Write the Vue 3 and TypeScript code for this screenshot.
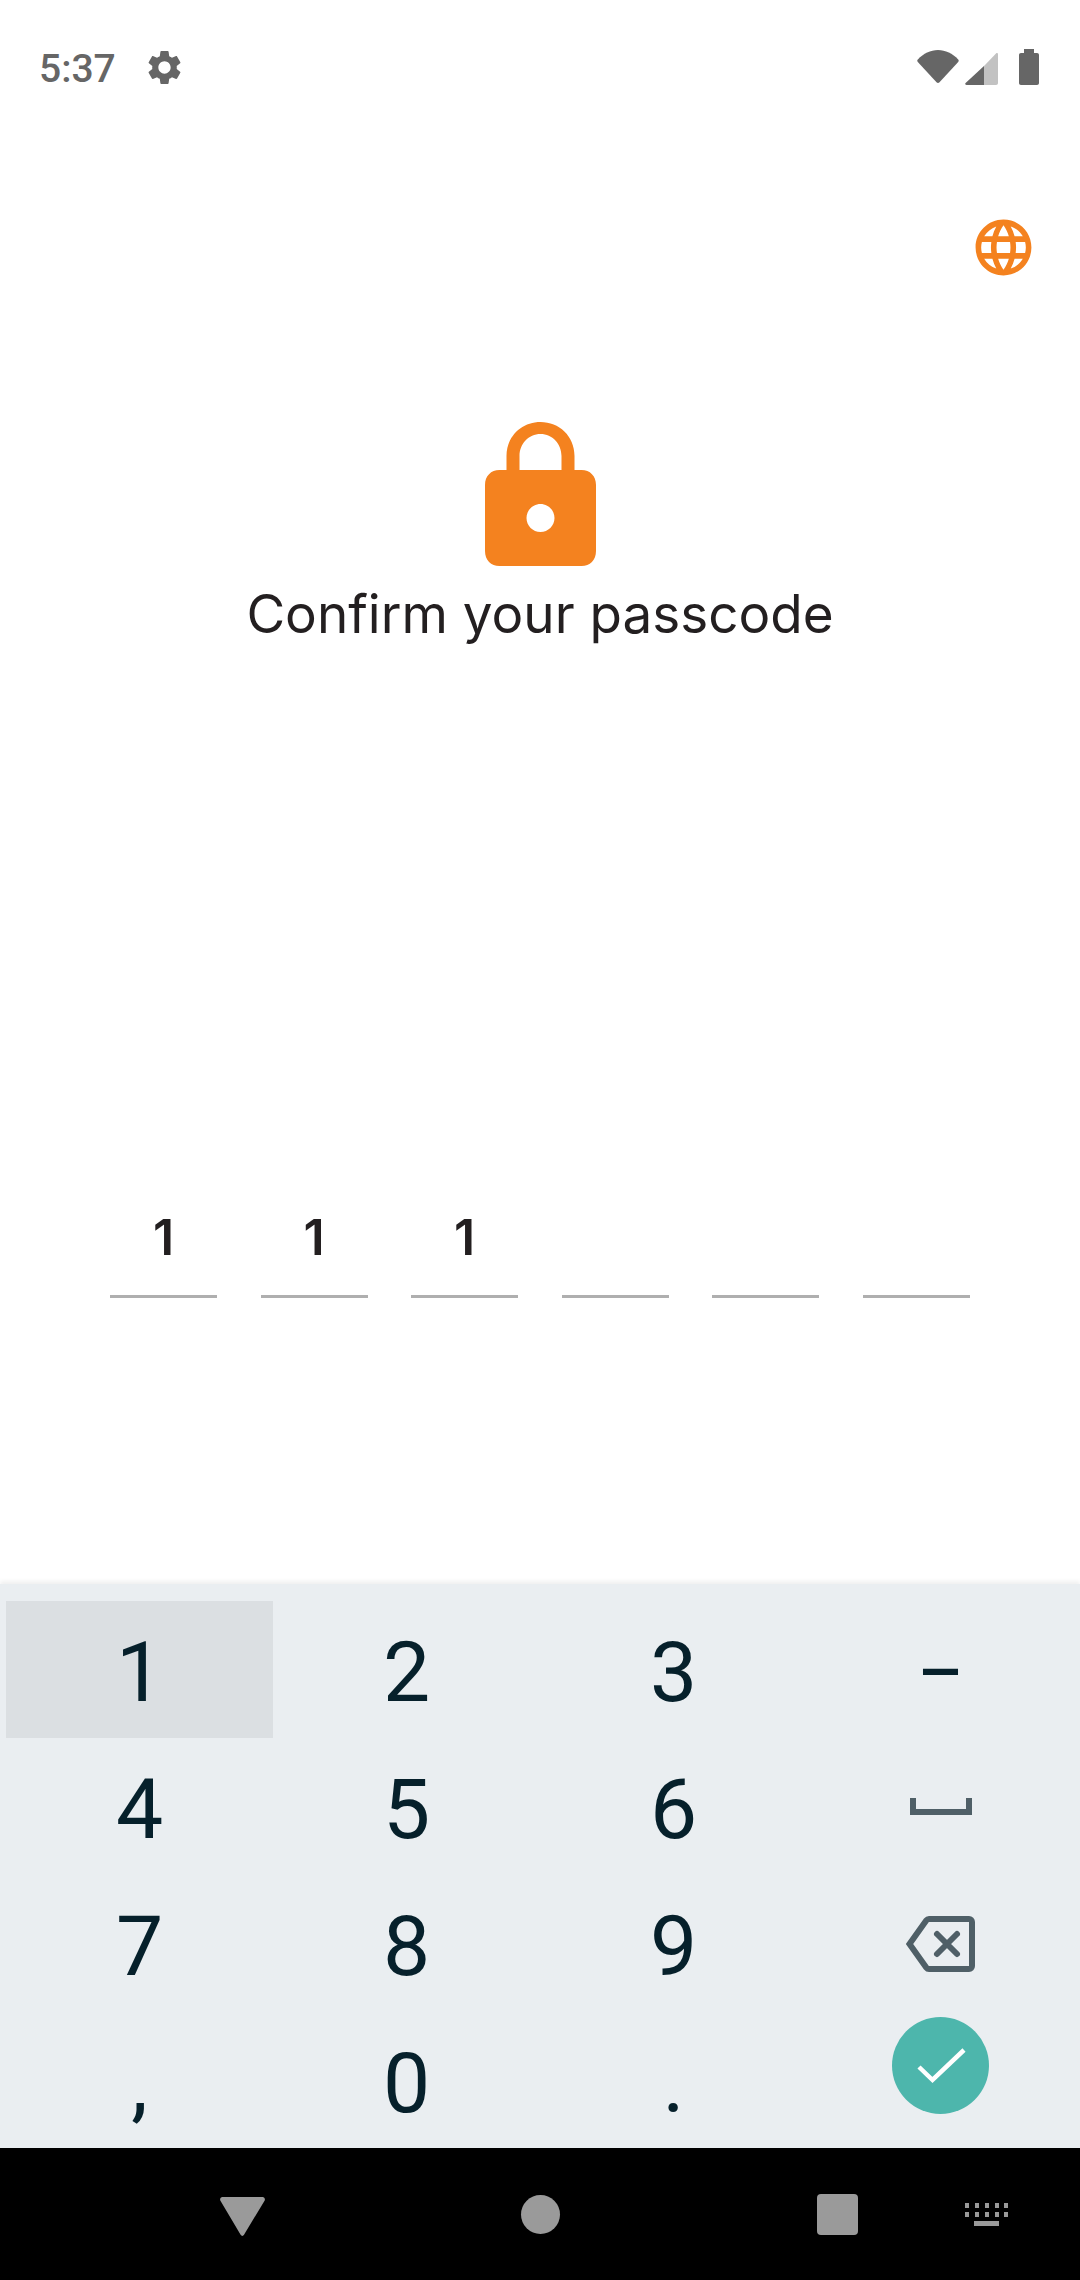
<template>
  <div class="screen">
    <div class="status-bar">
      <span class="clock">5:37</span>
      <svg class="gear" viewBox="0 0 24 24"><path d="M19.14 12.94c.04-.3.06-.61.06-.94 0-.32-.02-.64-.07-.94l2.03-1.58c.18-.14.23-.41.12-.61l-1.92-3.32c-.12-.22-.37-.29-.59-.22l-2.39.96c-.5-.38-1.03-.7-1.62-.94l-.36-2.54c-.04-.24-.24-.41-.48-.41h-3.84c-.24 0-.43.17-.47.41l-.36 2.54c-.59.24-1.13.57-1.62.94l-2.39-.96c-.22-.08-.47 0-.59.22L2.74 8.87c-.12.21-.08.47.12.61l2.03 1.58c-.05.3-.09.63-.09.94s.02.64.07.94l-2.03 1.58c-.18.14-.23.41-.12.61l1.92 3.32c.12.22.37.29.59.22l2.39-.96c.5.38 1.03.7 1.62.94l.36 2.54c.05.24.24.41.48.41h3.84c.24 0 .44-.17.47-.41l.36-2.54c.59-.24 1.13-.56 1.62-.94l2.39.96c.22.08.47 0 .59-.22l1.92-3.32c.12-.22.07-.47-.12-.61l-2.01-1.58zM12 15.6c-1.98 0-3.6-1.62-3.6-3.6s1.62-3.6 3.6-3.6 3.6 1.62 3.6 3.6-1.62 3.6-3.6 3.6z" /></svg>
      <div class="status-right">
        <svg class="wifi" viewBox="0 0 42 33"><path d="M.8 9.500C6.500 3.500 13.500 0 21 0s14.500 3.500 20.200 9.500c.7.800.7 1.600 0 2.400L22.500 32.300c-.9.900-2.100.900-3 0L.8 11.900c-.7-.8-.7-1.600 0-2.400z" /></svg>
        <svg class="signal" viewBox="0 0 33 33">
          <path class="signal-off" d="M19 33V14L31 1.500c.8-.8 2-.3 2 .8V31c0 1.200-.8 2-2 2z" />
          <path d="M19 14v19H1.500C.3 33-.3 31.800.6 31z" />
        </svg>
        <svg class="battery" viewBox="0 0 20 36"><path d="M5 0h10v4h3c1.200 0 2 .8 2 2v28c0 1.200-.8 2-2 2H2c-1.200 0-2-.8-2-2V6c0-1.200.8-2 2-2h3z" /></svg>
      </div>
    </div>

    <div class="lang-row">
      <svg class="globe" viewBox="0 0 24 24"><path d="M11.99 2C6.47 2 2 6.48 2 12s4.47 10 9.990 10C17.520 22 22 17.520 22 12S17.520 2 11.990 2zm6.930 6h-2.950c-.32-1.250-.78-2.450-1.380-3.560 1.840.63 3.370 1.910 4.330 3.560zM12 4.040c.83 1.200 1.480 2.530 1.910 3.960h-3.820c.43-1.430 1.080-2.760 1.910-3.960zM4.260 14C4.100 13.360 4 12.690 4 12s.1-1.360.26-2h3.380c-.08.66-.14 1.320-.14 2 0 .68.06 1.340.14 2H4.260zm.82 2h2.950c.32 1.250.78 2.450 1.380 3.560-1.840-.63-3.370-1.900-4.330-3.560zm2.950-8H5.080c.96-1.660 2.490-2.930 4.330-3.560C8.810 5.550 8.350 6.750 8.030 8zM12 19.960c-.83-1.200-1.480-2.530-1.910-3.960h3.820c-.43 1.430-1.080 2.760-1.910 3.960zM14.340 14H9.660c-.09-.66-.16-1.320-.16-2 0-.68.07-1.350.16-2h4.680c.09.650.16 1.320.16 2 0 .68-.07 1.340-.16 2zm.25 5.560c.6-1.110 1.060-2.310 1.380-3.560h2.950c-.96 1.650-2.490 2.930-4.330 3.560zM16.360 14c.08-.66.14-1.320.14-2 0-.68-.06-1.340-.14-2h3.380c.16.64.26 1.310.26 2s-.1 1.360-.26 2h-3.380z" /></svg>
    </div>

    <div class="prompt">
      <svg class="lock" viewBox="0 0 111 145">
        <path fill-rule="evenodd" d="M21.500 49V35C21.500 15 37 1 55.500 1S89.500 15 89.500 35v14h7C105 49 111 55 111 64v66c0 9-6 15-14.500 15h-82C6 145 0 139 0 130V64c0-9 6-15 14.500-15zm13 0h42V35c0-12-9-22-21-22s-21 10-21 22zM55.500 83c-7.700 0-14 6.300-14 14s6.300 14 14 14 14-6.300 14-14-6.300-14-14-14z" />
      </svg>
      <h1 class="title">Confirm your passcode</h1>
    </div>

    <div class="code-row">
      <div v-for="(slot, i) in codeSlots" :key="i" class="code-slot">{{ slot }}</div>
    </div>

    <div class="keyboard">
      <div v-for="key in keys" :key="key.id" class="key" :class="{ 'key-pressed': key.id === 'k1', 'key-done': key.id === 'done' }">
        <span v-if="key.label" :class="key.id === 'dash' ? 'key-dash' : 'key-label'">{{ key.label }}</span>
        <svg v-else-if="key.id === 'space'" class="icon-space" viewBox="0 0 62 17">
          <path d="M3 0v14h56V0" />
        </svg>
        <svg v-else-if="key.id === 'back'" class="icon-back" viewBox="0 0 69 56">
          <path d="M23 3h40c1.700 0 3 1.300 3 3v44c0 1.700-1.300 3-3 3H23c-1 0-2-.5-2.600-1.300L3.500 28 20.400 4.300C21 3.500 22 3 23 3z" />
          <path d="M31 18l20 20M51 18L31 38" stroke-linecap="round" />
        </svg>
        <div v-else class="done-btn">
          <svg viewBox="0 0 97 97"><path d="M27 50l13.500 13L72 33" /></svg>
        </div>
      </div>
    </div>

    <div class="nav-bar">
      <svg class="nav-back" viewBox="0 0 45 39"><path d="M2.500 0h40c1.800 0 2.900 1.800 2.200 3.400L24 37.800c-.7 1.500-2.600 1.500-3.400 0L.3 3.400C-.4 1.800.7 0 2.500 0z" /></svg>
      <div class="nav-home"></div>
      <div class="nav-recent"></div>
      <svg class="nav-kbd" viewBox="0 0 43 23">
        <rect v-for="x in dotCols" :key="'a' + x" :x="x" y="0" width="4" height="5" />
        <rect v-for="x in dotCols" :key="'b' + x" :x="x" y="9" width="4" height="5" />
        <rect x="9" y="18" width="25" height="5" />
      </svg>
    </div>
  </div>
</template>

<script setup lang="ts">
interface PadKey {
  id: string
  label?: string
}

const codeSlots = ['1', '1', '1', '', '', '']
const dotCols = [0, 10, 20, 30, 39]

const keys: PadKey[] = [
  { id: 'k1', label: '1' },
  { id: 'k2', label: '2' },
  { id: 'k3', label: '3' },
  { id: 'dash', label: '-' },
  { id: 'k4', label: '4' },
  { id: 'k5', label: '5' },
  { id: 'k6', label: '6' },
  { id: 'space' },
  { id: 'k7', label: '7' },
  { id: 'k8', label: '8' },
  { id: 'k9', label: '9' },
  { id: 'back' },
  { id: 'comma', label: ',' },
  { id: 'k0', label: '0' },
  { id: 'dot', label: '.' },
  { id: 'done' }
]
</script>

<style>
html,
body {
  margin: 0;
  background: #ffffff;
}
</style>

<style scoped>
.screen {
  width: 1080px;
  height: 2280px;
  display: flex;
  flex-direction: column;
  background: #ffffff;
  overflow: hidden;
  font-family: Roboto, "Liberation Sans", sans-serif;
}

.status-bar {
  height: 132px;
  flex: none;
  display: flex;
  align-items: flex-start;
  padding: 47px 41px 0 39px;
  box-sizing: border-box;
  color: #666666;
  fill: #666666;
}

.clock {
  font-size: 39px;
  font-weight: 500;
  line-height: 42px;
  width: 105px;
  margin-top: 1px;
}

.gear {
  width: 41px;
  height: 41px;
}

.status-right {
  margin-left: auto;
  margin-top: -1px;
  display: flex;
  align-items: flex-start;
}

.wifi {
  width: 42px;
  height: 33px;
  margin-top: 4px;
}

.signal {
  width: 33px;
  height: 33px;
  margin: 6px 21px 0 6px;
}

.signal-off {
  fill: #c2c2c2;
}

.battery {
  width: 20px;
  height: 36px;
  margin-top: 3px;
}

.lang-row {
  flex: none;
  display: flex;
  justify-content: flex-end;
  padding: 82px 43px 0 0;
}

.globe {
  width: 67px;
  height: 67px;
  fill: #f4821f;
}

.prompt {
  flex: none;
  display: flex;
  flex-direction: column;
  align-items: center;
  margin-top: 140px;
}

.lock {
  width: 111px;
  height: 145px;
  fill: #f4821f;
}

.title {
  margin: 16px 0 0;
  font-family: Inter, "Open Sans", sans-serif;
  font-size: 53px;
  line-height: 64px;
  font-weight: 400;
  color: #231f20;
}

.code-row {
  flex: none;
  display: flex;
  gap: 43.6px;
  margin-top: 561px;
  padding-left: 110px;
}

.code-slot {
  width: 107px;
  height: 88px;
  border-bottom: 3px solid #afafaf;
  text-align: center;
  font-family: Inter, "Open Sans", sans-serif;
  font-size: 50px;
  font-weight: 600;
  line-height: 60px;
  color: #231f20;
}

.keyboard {
  margin-top: auto;
  height: 564px;
  flex: none;
  box-sizing: border-box;
  padding: 17px 6px 0;
  display: grid;
  grid-template-columns: repeat(4, 267px);
  grid-auto-rows: 136.75px;
  background: #eaeef1;
  box-shadow: 0 -3px 4px rgba(0, 0, 0, 0.06);
  position: relative;
}

.key {
  display: flex;
  align-items: center;
  justify-content: center;
  font-size: 84px;
  line-height: 1;
  color: #06202b;
}

.key-pressed {
  background: #dbdfe2;
}

.key-label {
  margin-top: 8px;
}

.key-dash {
  display: inline-block;
  transform: scaleX(1.75);
}

.key-done {
  align-items: flex-start;
}

.icon-space {
  width: 62px;
  height: 17px;
  fill: none;
  stroke: #4f5f67;
  stroke-width: 6;
}

.icon-back {
  width: 69px;
  height: 56px;
  margin-top: 3px;
  fill: none;
  stroke: #4f5f67;
  stroke-width: 6;
}

.done-btn {
  width: 97px;
  height: 97px;
  margin-top: 6px;
  border-radius: 50%;
  background: #4db6ac;
}

.done-btn svg {
  display: block;
  fill: none;
  stroke: #ffffff;
  stroke-width: 4.5;
}

.nav-bar {
  height: 132px;
  flex: none;
  position: relative;
  display: flex;
  align-items: flex-start;
  background: #000000;
}

.nav-back {
  width: 45px;
  height: 39px;
  margin: 49px 0 0 220px;
  fill: #9a9a9a;
}

.nav-home {
  width: 39px;
  height: 39px;
  margin: 47px 0 0 256px;
  border-radius: 50%;
  background: #9a9a9a;
}

.nav-recent {
  width: 41px;
  height: 41px;
  margin: 46px 0 0 257px;
  border-radius: 4px;
  background: #9a9a9a;
}

.nav-kbd {
  width: 43px;
  height: 23px;
  margin: 55px 0 0 107px;
  fill: #9a9a9a;
}
</style>
